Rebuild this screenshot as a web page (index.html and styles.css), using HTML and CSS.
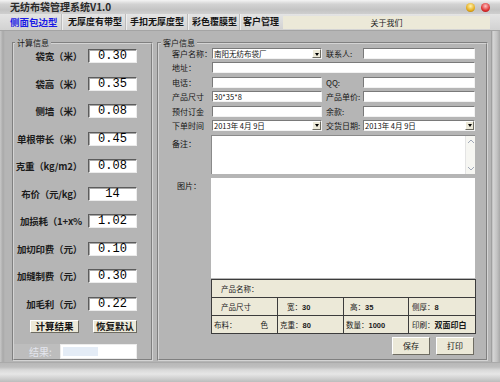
FILE: index.html
```html
<!DOCTYPE html>
<html lang="zh-CN">
<head>
  <meta charset="UTF-8" />
  <title>无纺布袋管理系统V1.0</title>
  <link rel="stylesheet" href="styles.css">
</head>
<body>
  <div class="window">
    <div class="titlebar">
      <span class="title">无纺布袋管理系统V1.0</span>
      <span class="winbtns"><i class="dot min"></i><i class="dot close"></i></span>
    </div>

    <div class="tabs">
      <span class="tab active t1">侧面包边型</span>
      <span class="tab t2">无厚度有带型</span>
      <span class="tab t3">手扣无厚度型</span>
      <span class="tab t4">彩色覆膜型</span>
      <span class="tab t5">客户管理</span>
      <span class="about">关于我们</span>
    </div>

    <div class="main">
      <fieldset class="group calc">
        <legend>计算信息</legend>
        <div class="calc-grid">
          <label>袋宽（米）</label><span class="num">0.30</span>
          <label>袋高（米）</label><span class="num">0.35</span>
          <label>侧墙（米）</label><span class="num">0.08</span>
          <label>单根带长（米）</label><span class="num">0.45</span>
          <label>克重（kg/m2）</label><span class="num">0.08</span>
          <label>布价（元/kg）</label><span class="num">14</span>
          <label>加损耗（1+x%</label><span class="num">1.02</span>
          <label>加切印费（元）</label><span class="num">0.10</span>
          <label>加缝制费（元）</label><span class="num">0.30</span>
          <label>加毛利（元）</label><span class="num">0.22</span>
        </div>
        <div class="calc-btns">
          <button class="btn calc-btn">计算结果</button>
          <button class="btn reset-btn">恢复默认</button>
        </div>
        <div class="result">
          <span class="result-label">结果:</span>
          <span class="result-box"><i class="progress"></i></span>
        </div>
      </fieldset>

      <fieldset class="group cust">
        <legend>客户信息</legend>
        <div class="cust-form">
          <label>客户名称：</label>
          <div class="field combo"><span>南阳无纺布袋厂</span><i class="drop"></i></div>
          <label class="lbl2">联系人:</label>
          <div class="field"></div>

          <label>地址：</label>
          <div class="field wide"></div>

          <label>电话：</label>
          <div class="field"></div>
          <label class="lbl2">QQ:</label>
          <div class="field"></div>

          <label>产品尺寸</label>
          <div class="field">30*35*8</div>
          <label class="lbl2">产品单价:</label>
          <div class="field"></div>

          <label>预付订金</label>
          <div class="field"></div>
          <label class="lbl2">余款:</label>
          <div class="field"></div>

          <label>下单时间</label>
          <div class="field combo"><span>2013年 4月 9日</span><i class="drop"></i></div>
          <label class="lbl2">交货日期:</label>
          <div class="field combo"><span>2013年 4月 9日</span><i class="drop"></i></div>
        </div>

        <div class="memo-row">
          <label class="side-label">备注：</label>
          <div class="memo">
            <div class="memo-text"></div>
            <div class="vscroll">
              <svg width="8" height="6" viewBox="0 0 8 6"><path d="M1 5 L4 2 L7 5" fill="none" stroke="#a0a8b8" stroke-width="1"/></svg>
              <svg width="8" height="6" viewBox="0 0 8 6"><path d="M1 1 L4 4 L7 1" fill="none" stroke="#a0a8b8" stroke-width="1"/></svg>
            </div>
          </div>
        </div>

        <div class="pic-row">
          <label class="side-label pic-label">图片：</label>
          <div class="picture"></div>
        </div>

        <table class="summary">
          <colgroup><col style="width:66px"><col style="width:66px"><col style="width:65px"><col style="width:67px"></colgroup>
          <tr class="r1"><td colspan="4">产品名称：</td></tr>
          <tr class="r2"><td>产品尺寸</td><td>宽：<b>30</b></td><td>高：<b>35</b></td><td>侧厚：<b>8</b></td></tr>
          <tr class="r3">
            <td><span class="fabric"><span>布料：</span><span>色</span></span></td>
            <td>克重：<b>80</b></td><td>数量：<b>1000</b></td><td>印刷：<b class="print">双面印白</b></td>
          </tr>
        </table>

        <div class="actions">
          <button class="btn act">保存</button>
          <button class="btn act">打印</button>
        </div>
      </fieldset>
    </div>

    <div class="footer"></div>
  </div>
</body>
</html>
```

FILE: styles.css
```css
* {
  box-sizing: border-box;
  margin: 0;
  padding: 0;
}
body {
  width: 500px;
  height: 382px;
  overflow: hidden;
  font-family: "Noto Sans CJK SC", "DejaVu Sans", sans-serif;
  color: #111;
  background: #b5b5b5;
}
.window {
  width: 500px;
  height: 382px;
  display: flex;
  flex-direction: column;
}

/* title bar */
.titlebar {
  height: 14px;
  display: flex;
  align-items: center;
  justify-content: space-between;
  padding: 0 10px;
  background: linear-gradient(#f4f4f4, #d2d2d2 30%, #c4c4c4 70%, #cfcfcf);
}
.title {
  font-size: 10px;
  font-weight: bold;
  line-height: 12px;
  color: #2a2a2a;
}
.winbtns {
  display: flex;
  gap: 6px;
}
.dot {
  display: block;
  width: 9px;
  height: 9px;
  border-radius: 50%;
}
.dot.min {
  background: radial-gradient(circle at 50% 35%, #fff4b0, #e6ad1e 60%, #94650c);
}
.dot.close {
  background: radial-gradient(circle at 50% 35%, #ffc4c4, #dc3030 60%, #8c1010);
}

/* tabs */
.tabs {
  height: 17px;
  display: flex;
  padding-left: 4px;
  background: linear-gradient(#e4e4e4, #d2d2d2);
  border-bottom: 1px solid #a4a4a4;
}
.tab {
  font-size: 9px;
  font-weight: bold;
  line-height: 16px;
  color: #151515;
  white-space: nowrap;
  border-right: 1px solid #bcbcbc;
  box-shadow: 1px 0 0 #eeeeee;
}
.tab.active {
  color: #1a1ae6;
  font-size: 9.5px;
}
.t1 { width: 58px; padding-left: 6px; }
.t2 { width: 64px; padding-left: 6px; }
.t3 { width: 62px; padding-left: 4px; }
.t4 { width: 52px; padding-left: 4px; }
.t5 { width: 43px; padding-left: 3px; border-right: none; box-shadow: none; }
.about {
  width: 207px;
  margin: 2px 0 1px;
  background: #ece9d8;
  font-size: 8px;
  line-height: 13px;
  text-align: center;
  color: #222;
}

/* main area */
.main {
  flex: 1;
  display: flex;
  align-items: flex-start;
  gap: 4px;
  padding: 7px 0 0 12px;
  background: linear-gradient(to right, #c8c8c8 0, #a9a9a9 3px, #b5b5b5 5px, #b5b5b5 491px, #8e8e8e 491px, #d6d6d6 493px, #c2c2c2 497px, #a8a8a8 500px);
}
.group {
  height: 323px;
  border: 2px groove #d4d4d4;
  min-width: 0;
}
.group legend {
  font-size: 8px;
  line-height: 10px;
  padding: 0 2px;
  color: #1a1a1a;
}
.calc {
  width: 141px;
}
.calc legend {
  margin-left: 1px;
}
.cust {
  width: 331px;
}
.cust legend {
  margin-left: 2px;
}

/* left: calculation */
.calc-grid {
  display: grid;
  grid-template-columns: 1fr 49px;
  grid-auto-rows: 14px;
  row-gap: 13.5px;
  column-gap: 6px;
  padding: 1px 14px 0 0;
}
.calc-grid label {
  font-size: 9.5px;
  font-weight: bold;
  line-height: 14px;
  text-align: right;
  white-space: nowrap;
  letter-spacing: -0.2px;
  color: #1c1c1c;
}
.num {
  display: block;
  background: #fff;
  border: 1px solid;
  border-color: #5c5c5c #ececec #ececec #5c5c5c;
  box-shadow: inset 1px 1px 0 #a8a8a8;
  font-family: "Liberation Mono", monospace;
  font-size: 12px;
  line-height: 12px;
  text-align: center;
  color: #000;
}
.calc-btns {
  display: flex;
  gap: 14px;
  margin-top: 9.5px;
  padding-left: 16px;
}
.btn {
  height: 13px;
  font-family: inherit;
  font-size: 9.5px;
  font-weight: bold;
  line-height: 11px;
  color: #151515;
  background: #ece9d8;
  border: 1px solid;
  border-color: #ffffff #6e6c62 #6e6c62 #ffffff;
}
.calc-btn { width: 49px; }
.reset-btn { width: 44px; }
.result {
  display: flex;
  margin-top: 11px;
  height: 15px;
}
.result-label {
  width: 46px;
  padding-left: 15px;
  font-size: 10px;
  line-height: 15px;
  color: #e4e6ee;
  background: #bdbdbd;
}
.result-box {
  width: 77px;
  background: #fff;
  border: 1px solid #ececec;
  padding: 2px 0 0 2px;
}
.progress {
  display: block;
  width: 35px;
  height: 9px;
  background: #e4ecf6;
}

/* right: customer */
.cust-form {
  display: grid;
  grid-template-columns: 40px 110px 41px 112px;
  grid-auto-rows: 11px;
  row-gap: 3.4px;
  padding-left: 13px;
}
.cust-form label {
  font-size: 8px;
  line-height: 11px;
  white-space: nowrap;
  color: #151515;
}
.cust-form .lbl2 {
  padding-left: 4px;
}
.field {
  display: flex;
  align-items: center;
  background: #fff;
  border: 1px solid;
  border-color: #7a7a7a #f2f2f2 #f2f2f2 #7a7a7a;
  font-size: 7.5px;
  line-height: 9px;
  padding-left: 1px;
  white-space: nowrap;
  overflow: hidden;
}
.field.wide {
  grid-column: 2 / 5;
}
.combo span {
  flex: 1;
}
.drop {
  position: relative;
  width: 9px;
  height: 9px;
  background: #ece9d8;
  border: 1px solid;
  border-color: #fff #6e6c62 #6e6c62 #fff;
}
.drop::after {
  content: "";
  position: absolute;
  left: 1.5px;
  top: 2.5px;
  border-left: 2.5px solid transparent;
  border-right: 2.5px solid transparent;
  border-top: 3px solid #000;
}

.memo-row,
.pic-row {
  display: flex;
  padding-left: 13px;
  margin-top: 4px;
}
.side-label {
  width: 39px;
  font-size: 8px;
  line-height: 11px;
  padding-top: 3px;
  white-space: nowrap;
}
.pic-label {
  padding: 2px 0 0 5px;
}
.memo {
  width: 264px;
  height: 39px;
  display: flex;
  background: #fff;
  border-top: 1px solid #8a8a8a;
  border-left: 1px solid #8a8a8a;
}
.memo-text {
  flex: 1;
}
.vscroll {
  width: 10px;
  display: flex;
  flex-direction: column;
  justify-content: space-between;
  align-items: center;
  padding: 2px 0;
  background: #f6f6f2;
  border-left: 1px solid #e4e4e4;
}
.picture {
  width: 264px;
  height: 100px;
  background: #fff;
}

.summary {
  margin: 1px 0 0 52px;
  width: 264px;
  table-layout: fixed;
  border-collapse: collapse;
  background: #ece9d8;
  border: 1px solid #3c3c3c;
  font-size: 7.5px;
  color: #1a1a1a;
}
.summary td {
  height: 18px;
  border: 1px solid #3c3c3c;
  white-space: nowrap;
  overflow: hidden;
  vertical-align: middle;
}
.summary b {
  font-family: "Liberation Sans", sans-serif;
}
.summary b.print {
  font-family: inherit;
  font-size: 8px;
}
.summary .r1 td { padding-left: 9px; }
.summary .r2 td:nth-child(1) { padding-left: 9px; }
.summary .r2 td:nth-child(2) { padding-left: 9px; }
.summary .r2 td:nth-child(3) { padding-left: 6px; }
.summary .r2 td:nth-child(4) { padding-left: 3px; }
.summary .r3 td { padding-left: 2px; }
.summary .r3 td:nth-child(4) { padding-left: 3px; }
.fabric {
  display: flex;
  justify-content: space-between;
  padding-right: 9px;
}

.actions {
  display: flex;
  justify-content: flex-end;
  gap: 6px;
  margin-top: 3px;
  padding-right: 12px;
}
.act {
  width: 38px;
  height: 18px;
  font-size: 8px;
  font-weight: normal;
}

/* bottom frame */
.footer {
  height: 20px;
  background: linear-gradient(#9c9c9c 0, #b8b8b8 1px, #bfbfbf 5px, #d9d9d9 8px, #e6e6e6 12px, #cdcdcd 17px, #bcbcbc);
}
```
